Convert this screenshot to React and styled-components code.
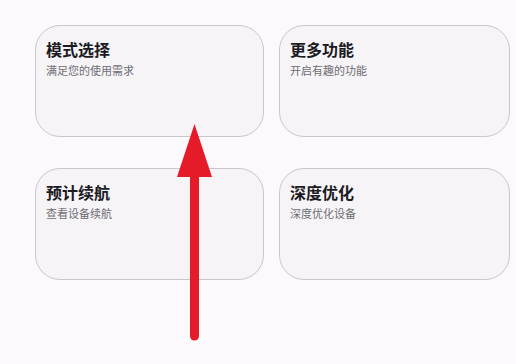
import React from "react";
import styled, { createGlobalStyle } from "styled-components";

const Global = createGlobalStyle`
  html, body {
    margin: 0;
    padding: 0;
    background: #fcf9fc;
  }
  body {
    font-family: "Noto Sans CJK SC", "Noto Sans", sans-serif;
  }
`;

const Page = styled.div`
  position: relative;
  width: 516px;
  height: 364px;
  overflow: hidden;
  background: #fcf9fc;
`;

const Grid = styled.div`
  display: grid;
  grid-template-columns: 229px 231px;
  grid-auto-rows: 112px;
  column-gap: 15px;
  row-gap: 31px;
  padding: 25px 0 0 35px;
`;

const Card = styled.div`
  box-sizing: border-box;
  border: 1px solid #c9c6cc;
  border-radius: 25px;
  background: #f6f4f7;
  padding: 11px 10px;
  display: flex;
  flex-direction: column;
  gap: 1px;
`;

const Title = styled.div`
  font-size: 16px;
  font-weight: 700;
  color: #1c1b1f;
  line-height: 24px;
`;

const Sub = styled.div`
  font-size: 11px;
  color: #6f6d73;
  line-height: 16px;
`;

const Arrow = styled.svg`
  position: absolute;
  left: 170px;
  top: 118px;
`;

const items = [
  { title: "模式选择", sub: "满足您的使用需求" },
  { title: "更多功能", sub: "开启有趣的功能" },
  { title: "预计续航", sub: "查看设备续航" },
  { title: "深度优化", sub: "深度优化设备" },
];

export default function App() {
  return (
    <Page>
      <Global />
      <Grid>
        {items.map((it) => (
          <Card key={it.title}>
            <Title>{it.title}</Title>
            <Sub>{it.sub}</Sub>
          </Card>
        ))}
      </Grid>
      <Arrow width="50" height="230" viewBox="0 0 50 230">
        <line x1="24.5" y1="50" x2="24.5" y2="218" stroke="#e51b2a" strokeWidth="9" strokeLinecap="round" />
        <polygon points="24.5,6 7,59 42,59" fill="#e51b2a" />
      </Arrow>
    </Page>
  );
}
